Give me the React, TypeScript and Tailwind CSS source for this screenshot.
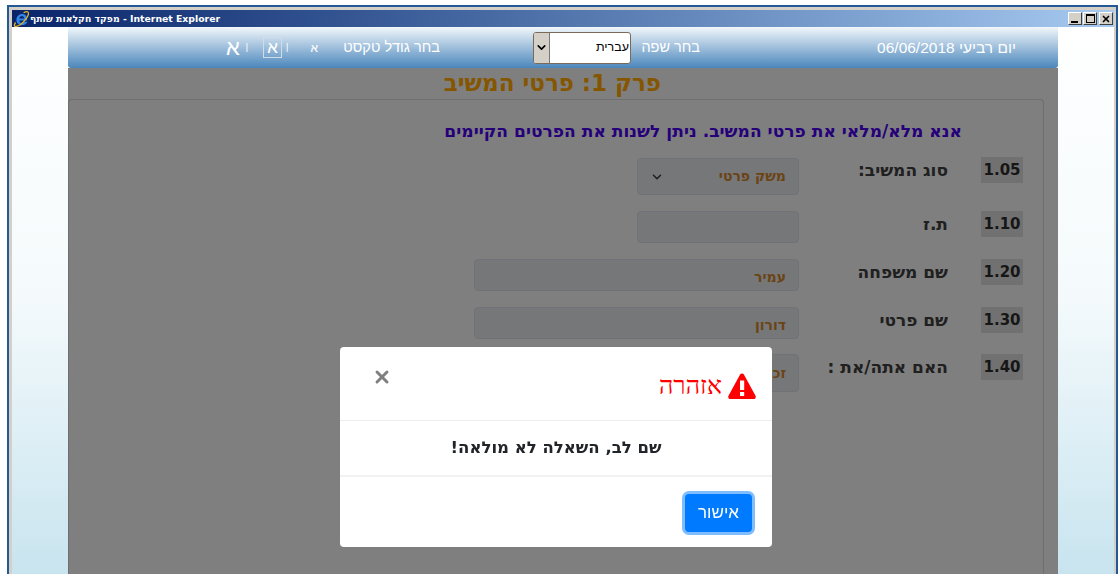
import { ChevronDown, X } from 'lucide-react';

const fields = [
  { num: '1.05', label: 'סוג המשיב:', value: 'משק פרטי', select: true, wide: false, h: 'mt-[1px] h-[37px]', rowH: 'h-[54px]' },
  { num: '1.10', label: 'ת.ז', value: '', select: false, wide: false, h: 'h-[32px]', rowH: 'h-[48px]' },
  { num: '1.20', label: 'שם משפחה', value: 'עמיר', select: false, wide: true, h: 'h-[32px]', rowH: 'h-[48px]' },
  { num: '1.30', label: 'שם פרטי', value: 'דורון', select: false, wide: true, h: 'h-[32px]', rowH: 'h-[47px]' },
  { num: '1.40', label: 'האם אתה/את :', value: 'זכר', select: false, wide: false, h: 'h-[38px]', rowH: 'h-[48px]' },
];

function IeLogo() {
  return (
    <svg viewBox="0 0 16 16" className="h-[16px] w-[16px] shrink-0">
      <path d="M13.800 9.500H6.300c.1 1.600 1.300 2.600 2.800 2.600 1.100 0 2-.5 2.500-1.400h2.800c-.8 2.300-2.900 3.500-5.300 3.500-3.300 0-5.700-2.300-5.700-5.500 0-3.200 2.400-5.700 5.800-5.700 3.200 0 5 2.400 5 5.300zM6.300 7.500h5c-.1-1.400-1-2.400-2.400-2.400-1.400 0-2.400 1-2.600 2.400z" fill="#2f86e6" />
      <path d="M2.600 11.500C.8 14 1 15.600 3 15.400c3-.3 7-3.700 9.800-7.300 2.300-3 3.300-5.900 2.200-7-.8-.8-2.500-.4-4.400.7" fill="none" stroke="#e6b422" strokeWidth="1.300" />
    </svg>
  );
}

function WindowButtons() {
  const box = 'flex h-[13px] w-[14px] border border-b-[#404040] border-l-white border-r-[#404040] border-t-white bg-[#d4d0c8]';
  return (
    <div className="flex gap-[1px]">
      <span className={`${box} items-end justify-start pb-[1px] pl-[2px]`}>
        <span className="h-[2px] w-[7px] bg-black" />
      </span>
      <span className={`${box} items-center justify-center`}>
        <span className="h-[9px] w-[9px] border border-t-2 border-black" />
      </span>
      <span className={`${box} ml-[1px] items-center justify-center`}>
        <X size={10} strokeWidth={4} className="text-black" />
      </span>
    </div>
  );
}

export default function App() {
  return (
    <div className="h-[574px] w-[1120px] overflow-hidden bg-white pl-[7px] pr-[2px] pt-[5px] font-['Liberation_Sans',sans-serif]">
      {/* IE popup frame */}
      <div className="h-full border-x-2 border-t-2 border-[#235a96]">
        <div className="flex h-full flex-col border-l-[3px] border-r-2 border-t-[3px] border-[#d4d0c8]">
          <div className="flex h-[17px] shrink-0 items-center justify-between bg-gradient-to-r from-[#0a246a] to-[#a6caf0] pl-[1px] pr-[1px]">
            <div className="flex items-center gap-[1px] font-['DejaVu_Sans',sans-serif] text-[9.300px] font-bold text-white">
              <IeLogo />
              <span>מפקד חקלאות שותף - Internet Explorer</span>
            </div>
            <WindowButtons />
          </div>

          <div className="flex min-h-0 flex-1 justify-center bg-gradient-to-b from-white via-[#f4fafc] to-[#c8e4ef] px-[56px]" dir="rtl">
            <div className="flex w-[990px] shrink-0 flex-col">
              {/* language and text size bar */}
              <header className="flex h-[41px] shrink-0 items-center rounded-b-[3px] bg-gradient-to-b from-[#f2f7fa] to-[#4a87bb] text-white">
                <span className="mr-[42px] w-[138px] whitespace-nowrap text-[15.500px]">יום רביעי 06/06/2018</span>
                <span className="mr-[178px] w-[60px] whitespace-nowrap text-[14.500px]">בחר שפה</span>
                <div className="mr-[9px] flex h-[32px] w-[98px] items-center justify-between overflow-hidden rounded-[3px] border border-[#7a6a5a] bg-white text-[12.500px] text-black">
                  <span className="pr-[1px]">עברית</span>
                  <span className="flex h-full w-[16px] items-center justify-center border-r border-[#777] bg-[#d4d0c8]">
                    <ChevronDown size={13} strokeWidth={3} />
                  </span>
                </div>
                <span className="mr-[93px] w-[96px] whitespace-nowrap text-[14.500px]">בחר גודל טקסט</span>
                <span className="mr-[26px] text-[12px]">א</span>
                <span className="mr-[22px] text-[9px]">|</span>
                <span className="mr-[4px] flex h-[21px] w-[19px] items-center justify-center border border-[#d0dde8] text-[17px]">א</span>
                <span className="mr-[15px] text-[9px]">|</span>
                <span className="mr-[6px] text-[22px]">א</span>
              </header>

              {/* dimmed survey page */}
              <main className="flex min-h-0 flex-1 flex-col bg-[#7f7f7f]">
                <h1 className="h-[31px] shrink-0 pr-[397px] pt-[1px] font-['DejaVu_Sans',sans-serif] text-[23px] font-bold leading-[29px] text-[#855600]">
                  פרק 1: פרטי המשיב
                </h1>
                <section className="mr-[14px] flex-1 rounded-t-[4px] border border-b-0 border-[#6f6f6f] pr-[20px] pt-[21px]">
                  <p className="mb-[16px] h-[20px] whitespace-nowrap pr-[61px] font-['DejaVu_Sans',sans-serif] text-[17.100px] font-bold leading-[20px] text-[#25007a]">
                    אנא מלא/מלאי את פרטי המשיב. ניתן לשנות את הפרטים הקיימים
                  </p>
                  {fields.map((f) => (
                    <div key={f.num} className={`flex items-start ${f.rowH}`}>
                      <span className="flex h-[26px] w-[42px] shrink-0 items-center justify-center bg-[#717171] pt-[1px] font-['DejaVu_Sans',sans-serif] text-[15px] font-bold text-[#161616]">
                        {f.num}
                      </span>
                      <span className="mr-[33px] w-[149px] shrink-0 whitespace-nowrap font-['DejaVu_Sans',sans-serif] text-[17px] font-bold leading-[26px] text-[#202020]">
                        {f.label}
                      </span>
                      <div
                        className={`flex items-center justify-between rounded-[4px] border border-[#6f7378] bg-[#767779] pl-[12px] pr-[12px] font-['DejaVu_Sans',sans-serif] text-[14px] font-bold text-[#6b4416] ${f.h} ${f.wide ? 'w-[325px] pt-[4px]' : 'w-[162px]'}`}
                      >
                        <span>{f.value}</span>
                        {f.select && <ChevronDown size={14} strokeWidth={2.500} className="text-[#1e1e1e]" />}
                      </div>
                    </div>
                  ))}
                </section>
              </main>
            </div>
          </div>
        </div>
      </div>

      {/* warning dialog over the dimmed page */}
      <div className="fixed left-[340px] top-[347px] flex h-[200px] w-[432px] flex-col rounded-[4px] bg-white" dir="rtl">
        <div className="flex h-[74px] shrink-0 items-start justify-between border-b border-[#eeeeee] pl-[32px] pr-[16px] pt-[24px]">
          <div className="flex items-center gap-[6px]">
            <svg viewBox="0 0 28 26" className="h-[26px] w-[28px]">
              <path d="M14 .5c.8 0 1.500.4 1.900 1.100L27.500 22.800c.8 1.500-.2 3.200-1.900 3.200H2.400C.7 26-.3 24.300.5 22.800L12.100 1.600C12.500.9 13.200.5 14 .5z" fill="#ff0000" />
              <rect x="12" y="7.500" width="4.200" height="9.500" fill="#fff" />
              <rect x="12" y="19" width="4.200" height="4" fill="#fff" />
            </svg>
            <span className="font-['Liberation_Serif',serif] text-[25px] leading-[30px] text-[#ff0000]">אזהרה</span>
          </div>
          <X size={20} strokeWidth={3.500} className="-mt-[4px] text-[#7f7f7f]" />
        </div>
        <div className="flex h-[56px] shrink-0 items-center justify-center border-b-2 border-[#f2f2f2] font-['DejaVu_Sans',sans-serif] text-[16.500px] font-bold text-[#212529]">
          שם לב, השאלה לא מולאה!
        </div>
        <div className="flex flex-1 items-start justify-start pr-[20px] pt-[17px]">
          <button className="flex h-[38px] w-[67px] items-center justify-center rounded-[4px] bg-[#007bff] text-[17px] text-white ring-[3px] ring-[#80bdff]">
            אישור
          </button>
        </div>
      </div>
    </div>
  );
}
